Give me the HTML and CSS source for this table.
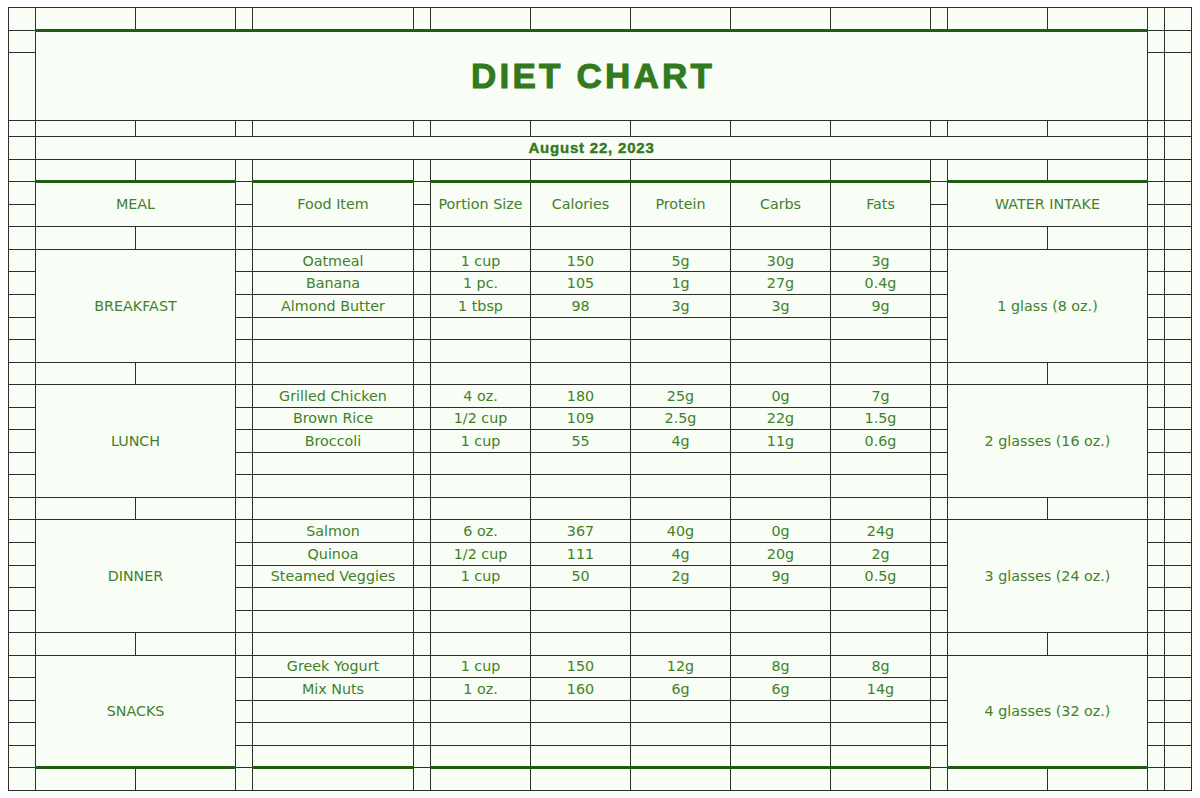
FILE: index.html
```html
<!DOCTYPE html>
<html lang="en">
<head>
<meta charset="utf-8">
<title>Diet Chart</title>
<link rel="stylesheet" href="styles.css">
</head>
<body>
<table class="sheet">
  <colgroup>
    <col class="w-edge"><col class="w-std"><col class="w-std"><col class="w-gap"><col class="w-food"><col class="w-gap">
    <col class="w-std"><col class="w-std"><col class="w-std"><col class="w-std"><col class="w-std"><col class="w-gap">
    <col class="w-std"><col class="w-std"><col class="w-gap"><col class="w-edge">
  </colgroup>
  <tbody>
    <tr class="r-std"><td></td><td></td><td></td><td></td><td></td><td></td><td></td><td></td><td></td><td></td><td></td><td></td><td></td><td></td><td></td><td></td></tr>
    <tr class="r-std"><td></td><td class="title gtop" colspan="13" rowspan="2">DIET CHART</td><td></td><td></td></tr>
    <tr class="r-tall"><td></td><td></td><td></td></tr>
    <tr class="r-thin"><td></td><td></td><td></td><td></td><td></td><td></td><td></td><td></td><td></td><td></td><td></td><td></td><td></td><td></td><td></td><td></td></tr>
    <tr class="r-date"><td></td><td class="date" colspan="13">August 22, 2023</td><td></td><td></td></tr>
    <tr class="r-std"><td></td><td></td><td></td><td></td><td></td><td></td><td></td><td></td><td></td><td></td><td></td><td></td><td></td><td></td><td></td><td></td></tr>
    <tr class="r-std"><td></td><td class="gtop head" colspan="2" rowspan="2">MEAL</td><td></td><td class="gtop head" rowspan="2">Food Item</td><td></td><td class="gtop head" rowspan="2">Portion Size</td><td class="gtop head" rowspan="2">Calories</td><td class="gtop head" rowspan="2">Protein</td><td class="gtop head" rowspan="2">Carbs</td><td class="gtop head" rowspan="2">Fats</td><td></td><td class="gtop head" colspan="2" rowspan="2">WATER INTAKE</td><td></td><td></td></tr>
    <tr class="r-std"><td></td><td></td><td></td><td></td><td></td><td></td></tr>
    <tr class="r-std"><td></td><td></td><td></td><td></td><td></td><td></td><td></td><td></td><td></td><td></td><td></td><td></td><td></td><td></td><td></td><td></td></tr>

    <tr class="r-std"><td></td><td colspan="2" rowspan="5">BREAKFAST</td><td></td><td>Oatmeal</td><td></td><td>1 cup</td><td>150</td><td>5g</td><td>30g</td><td>3g</td><td></td><td colspan="2" rowspan="5">1 glass (8 oz.)</td><td></td><td></td></tr>
    <tr class="r-std"><td></td><td></td><td>Banana</td><td></td><td>1 pc.</td><td>105</td><td>1g</td><td>27g</td><td>0.4g</td><td></td><td></td><td></td></tr>
    <tr class="r-std"><td></td><td></td><td>Almond Butter</td><td></td><td>1 tbsp</td><td>98</td><td>3g</td><td>3g</td><td>9g</td><td></td><td></td><td></td></tr>
    <tr class="r-std"><td></td><td></td><td></td><td></td><td></td><td></td><td></td><td></td><td></td><td></td><td></td><td></td></tr>
    <tr class="r-std"><td></td><td></td><td></td><td></td><td></td><td></td><td></td><td></td><td></td><td></td><td></td><td></td></tr>
    <tr class="r-std"><td></td><td></td><td></td><td></td><td></td><td></td><td></td><td></td><td></td><td></td><td></td><td></td><td></td><td></td><td></td><td></td></tr>

    <tr class="r-std"><td></td><td colspan="2" rowspan="5">LUNCH</td><td></td><td>Grilled Chicken</td><td></td><td>4 oz.</td><td>180</td><td>25g</td><td>0g</td><td>7g</td><td></td><td colspan="2" rowspan="5">2 glasses (16 oz.)</td><td></td><td></td></tr>
    <tr class="r-std"><td></td><td></td><td>Brown Rice</td><td></td><td>1/2 cup</td><td>109</td><td>2.5g</td><td>22g</td><td>1.5g</td><td></td><td></td><td></td></tr>
    <tr class="r-std"><td></td><td></td><td>Broccoli</td><td></td><td>1 cup</td><td>55</td><td>4g</td><td>11g</td><td>0.6g</td><td></td><td></td><td></td></tr>
    <tr class="r-std"><td></td><td></td><td></td><td></td><td></td><td></td><td></td><td></td><td></td><td></td><td></td><td></td></tr>
    <tr class="r-std"><td></td><td></td><td></td><td></td><td></td><td></td><td></td><td></td><td></td><td></td><td></td><td></td></tr>
    <tr class="r-std"><td></td><td></td><td></td><td></td><td></td><td></td><td></td><td></td><td></td><td></td><td></td><td></td><td></td><td></td><td></td><td></td></tr>

    <tr class="r-std"><td></td><td colspan="2" rowspan="5">DINNER</td><td></td><td>Salmon</td><td></td><td>6 oz.</td><td>367</td><td>40g</td><td>0g</td><td>24g</td><td></td><td colspan="2" rowspan="5">3 glasses (24 oz.)</td><td></td><td></td></tr>
    <tr class="r-std"><td></td><td></td><td>Quinoa</td><td></td><td>1/2 cup</td><td>111</td><td>4g</td><td>20g</td><td>2g</td><td></td><td></td><td></td></tr>
    <tr class="r-std"><td></td><td></td><td>Steamed Veggies</td><td></td><td>1 cup</td><td>50</td><td>2g</td><td>9g</td><td>0.5g</td><td></td><td></td><td></td></tr>
    <tr class="r-std"><td></td><td></td><td></td><td></td><td></td><td></td><td></td><td></td><td></td><td></td><td></td><td></td></tr>
    <tr class="r-std"><td></td><td></td><td></td><td></td><td></td><td></td><td></td><td></td><td></td><td></td><td></td><td></td></tr>
    <tr class="r-std"><td></td><td></td><td></td><td></td><td></td><td></td><td></td><td></td><td></td><td></td><td></td><td></td><td></td><td></td><td></td><td></td></tr>

    <tr class="r-std"><td></td><td class="gbot" colspan="2" rowspan="5">SNACKS</td><td></td><td>Greek Yogurt</td><td></td><td>1 cup</td><td>150</td><td>12g</td><td>8g</td><td>8g</td><td></td><td class="gbot" colspan="2" rowspan="5">4 glasses (32 oz.)</td><td></td><td></td></tr>
    <tr class="r-std"><td></td><td></td><td>Mix Nuts</td><td></td><td>1 oz.</td><td>160</td><td>6g</td><td>6g</td><td>14g</td><td></td><td></td><td></td></tr>
    <tr class="r-std"><td></td><td></td><td></td><td></td><td></td><td></td><td></td><td></td><td></td><td></td><td></td><td></td></tr>
    <tr class="r-std"><td></td><td></td><td></td><td></td><td></td><td></td><td></td><td></td><td></td><td></td><td></td><td></td></tr>
    <tr class="r-std"><td></td><td></td><td class="gbot"></td><td></td><td class="gbot"></td><td class="gbot"></td><td class="gbot"></td><td class="gbot"></td><td class="gbot"></td><td></td><td></td><td></td></tr>
    <tr class="r-std"><td></td><td></td><td></td><td></td><td></td><td></td><td></td><td></td><td></td><td></td><td></td><td></td><td></td><td></td><td></td><td></td></tr>
  </tbody>
</table>
</body>
</html>
```

FILE: styles.css
```css
html, body {
  background: #ffffff;
}

body {
  margin: 7px 0 0 8px;
  font-family: "DejaVu Sans", "Noto Sans", sans-serif;
}

.sheet {
  border-collapse: collapse;
  table-layout: fixed;
  width: 1183px;
  background: #f8fdf5;
}

.w-edge { width: 27px; }
.w-std { width: 100px; }
.w-gap { width: 17px; }
.w-food { width: 161px; }

.sheet td {
  border: 1px solid #2e2e2e;
  padding: 0;
  font-size: 14.3px;
  line-height: 16px;
  color: #43802b;
  text-align: center;
  vertical-align: middle;
  white-space: nowrap;
  overflow: hidden;
}

.r-std { height: 22.55px; }
.r-tall { height: 67.6px; }
.r-thin { height: 16px; }
.r-date { height: 23px; }

.sheet td.gtop {
  border-top: 3px solid #1f5c10;
}

.sheet td.head {
  padding-bottom: 2px;
}

.sheet td.gbot {
  border-bottom: 3px solid #1f5c10;
}

.sheet td.title {
  font-family: "Liberation Sans", Arial, sans-serif;
  font-weight: 700;
  font-size: 35px;
  line-height: 40px;
  letter-spacing: 3.2px;
  padding-left: 3px;
  color: #33791d;
  -webkit-text-stroke: 1px #33791d;
}

.sheet td.date {
  font-family: "Liberation Sans", Arial, sans-serif;
  font-weight: 700;
  font-size: 15px;
  line-height: 18px;
  letter-spacing: 0.8px;
  color: #33791d;
  -webkit-text-stroke: 0.4px #33791d;
}
```
